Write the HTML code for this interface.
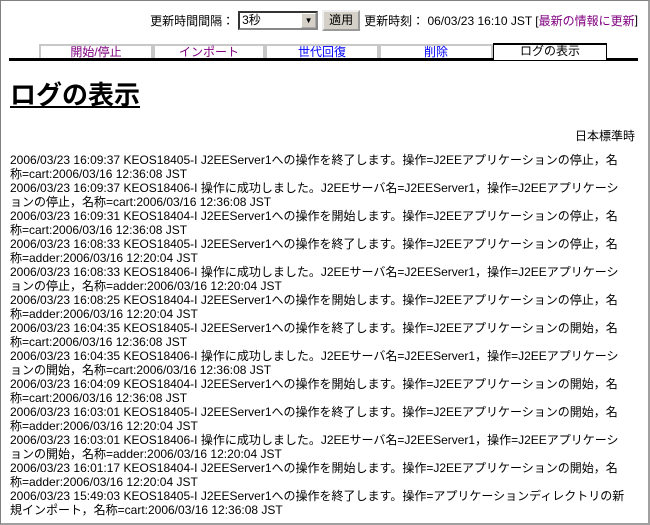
<!DOCTYPE html>
<html><head><meta charset="utf-8"><style>
*{margin:0;padding:0;box-sizing:border-box}
html,body{width:650px;height:525px;overflow:hidden;background:#fff}
body{font-family:"Liberation Sans","Noto Sans CJK JP",sans-serif;font-size:12px;color:#000;position:relative;border:1px solid #808080;border-right:2px solid #a0a0a0;border-bottom:2px solid #a0a0a0}
.top{position:absolute;top:9px;right:10px;height:20px;display:flex;align-items:center;white-space:nowrap}
.sel{width:80px;height:19px;border:2px inset #888;margin:0 4px;position:relative;padding-left:2px;line-height:15px;background:#fff}
.sel .ar{position:absolute;right:0;top:0;width:15px;height:15px;background:#d4d0c8;border:1px outset #fff;font-size:8px;text-align:center;line-height:13px}
.btn{height:21px;border:2px outset #eee;background:#d4d0c8;padding:0 5px;line-height:17px;margin-right:4px}
a{color:#800080;text-decoration:none}
.tabs{position:absolute;top:43px;left:8px;width:629px;height:17px;border-bottom:3px solid #000}
.tab{position:absolute;top:0;height:14px;border:2px solid #c8c8c8;border-bottom:none;text-align:center;line-height:12px;font-size:12px}
.act{border:1px solid #000;border-top:2px solid #000;border-bottom:none;background:#fff;height:17px;top:-1px}
h1{position:absolute;top:74px;left:9px;font-size:26px;font-weight:bold;text-decoration:underline;letter-spacing:0px}
.tz{position:absolute;top:126px;right:13px}
.log{position:absolute;top:152px;left:9px;width:630px;line-height:14px;white-space:nowrap}
</style></head><body>
<div class="top">更新時間間隔：<div class="sel">3秒<div class="ar">▼</div></div><div class="btn">適用</div>更新時刻： 06/03/23 16:10 JST [<a href="#">最新の情報に更新</a>]</div>
<div class="tabs">
<div class="tab" style="left:30px;width:114px;color:#800080">開始/停止</div>
<div class="tab" style="left:144px;width:112px;color:#800080">インポート</div>
<div class="tab" style="left:256px;width:114px;color:#0000ff">世代回復</div>
<div class="tab" style="left:370px;width:114px;color:#0000ff">削除</div>
<div class="tab act" style="left:484px;width:114px">ログの表示</div>
</div>
<h1>ログの表示</h1>
<div class="tz">日本標準時</div>
<div class="log">
2006/03/23 16:09:37 KEOS18405-I J2EEServer1への操作を終了します。操作=J2EEアプリケーションの停止，名<br>称=cart:2006/03/16 12:36:08 JST<br>
2006/03/23 16:09:37 KEOS18406-I 操作に成功しました。J2EEサーバ名=J2EEServer1，操作=J2EEアプリケーシ<br>ョンの停止，名称=cart:2006/03/16 12:36:08 JST<br>
2006/03/23 16:09:31 KEOS18404-I J2EEServer1への操作を開始します。操作=J2EEアプリケーションの停止，名<br>称=cart:2006/03/16 12:36:08 JST<br>
2006/03/23 16:08:33 KEOS18405-I J2EEServer1への操作を終了します。操作=J2EEアプリケーションの停止，名<br>称=adder:2006/03/16 12:20:04 JST<br>
2006/03/23 16:08:33 KEOS18406-I 操作に成功しました。J2EEサーバ名=J2EEServer1，操作=J2EEアプリケーシ<br>ョンの停止，名称=adder:2006/03/16 12:20:04 JST<br>
2006/03/23 16:08:25 KEOS18404-I J2EEServer1への操作を開始します。操作=J2EEアプリケーションの停止，名<br>称=adder:2006/03/16 12:20:04 JST<br>
2006/03/23 16:04:35 KEOS18405-I J2EEServer1への操作を終了します。操作=J2EEアプリケーションの開始，名<br>称=cart:2006/03/16 12:36:08 JST<br>
2006/03/23 16:04:35 KEOS18406-I 操作に成功しました。J2EEサーバ名=J2EEServer1，操作=J2EEアプリケーシ<br>ョンの開始，名称=cart:2006/03/16 12:36:08 JST<br>
2006/03/23 16:04:09 KEOS18404-I J2EEServer1への操作を開始します。操作=J2EEアプリケーションの開始，名<br>称=cart:2006/03/16 12:36:08 JST<br>
2006/03/23 16:03:01 KEOS18405-I J2EEServer1への操作を終了します。操作=J2EEアプリケーションの開始，名<br>称=adder:2006/03/16 12:20:04 JST<br>
2006/03/23 16:03:01 KEOS18406-I 操作に成功しました。J2EEサーバ名=J2EEServer1，操作=J2EEアプリケーシ<br>ョンの開始，名称=adder:2006/03/16 12:20:04 JST<br>
2006/03/23 16:01:17 KEOS18404-I J2EEServer1への操作を開始します。操作=J2EEアプリケーションの開始，名<br>称=adder:2006/03/16 12:20:04 JST<br>
2006/03/23 15:49:03 KEOS18405-I J2EEServer1への操作を終了します。操作=アプリケーションディレクトリの新<br>規インポート，名称=cart:2006/03/16 12:36:08 JST
</div>
</body></html>
